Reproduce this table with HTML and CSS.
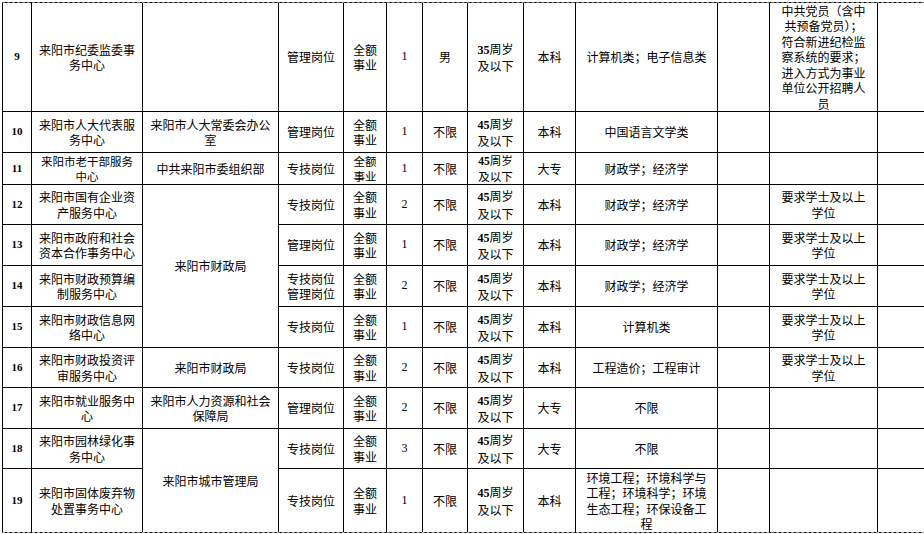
FILE: index.html
```html
<!DOCTYPE html>
<html lang="zh-CN">
<head>
<meta charset="utf-8">
<title>岗位表</title>
<link rel="stylesheet" href="styles.css">
</head>
<body>
<div class="grid">
  <div class="cell num">9</div><div class="cell">来阳市纪委监委事<br>务中心</div><div class="cell"></div><div class="cell">管理岗位</div><div class="cell">全额<br>事业</div><div class="cell cnt">1</div><div class="cell">男</div><div class="cell"><span><span class="dg">35</span>周岁<br>及以下</span></div><div class="cell">本科</div><div class="cell">计算机类；电子信息类</div><div class="cell"></div><div class="cell">中共党员（含中<br>共预备党员）；<br>符合新进纪检监<br>察系统的要求；<br>进入方式为事业<br>单位公开招聘人<br>员</div><div class="cell"></div>

  <div class="cell num">10</div><div class="cell">来阳市人大代表服<br>务中心</div><div class="cell">来阳市人大常委会办公<br>室</div><div class="cell">管理岗位</div><div class="cell">全额<br>事业</div><div class="cell cnt">1</div><div class="cell">不限</div><div class="cell"><span><span class="dg">45</span>周岁<br>及以下</span></div><div class="cell">本科</div><div class="cell">中国语言文学类</div><div class="cell"></div><div class="cell"></div><div class="cell"></div>

  <div class="cell num">11</div><div class="cell tight">来阳市老干部服务<br>中心</div><div class="cell">中共来阳市委组织部</div><div class="cell">专技岗位</div><div class="cell tight">全额<br>事业</div><div class="cell cnt">1</div><div class="cell">不限</div><div class="cell tight"><span><span class="dg">45</span>周岁<br>及以下</span></div><div class="cell">大专</div><div class="cell">财政学；经济学</div><div class="cell"></div><div class="cell"></div><div class="cell"></div>

  <div class="cell num">12</div><div class="cell">来阳市国有企业资<br>产服务中心</div><div class="cell span4">来阳市财政局</div><div class="cell">专技岗位</div><div class="cell">全额<br>事业</div><div class="cell cnt">2</div><div class="cell">不限</div><div class="cell"><span><span class="dg">45</span>周岁<br>及以下</span></div><div class="cell">本科</div><div class="cell">财政学；经济学</div><div class="cell"></div><div class="cell">要求学士及以上<br>学位</div><div class="cell"></div>

  <div class="cell num">13</div><div class="cell">来阳市政府和社会<br>资本合作事务中心</div><div class="cell">管理岗位</div><div class="cell">全额<br>事业</div><div class="cell cnt">1</div><div class="cell">不限</div><div class="cell"><span><span class="dg">45</span>周岁<br>及以下</span></div><div class="cell">本科</div><div class="cell">财政学；经济学</div><div class="cell"></div><div class="cell">要求学士及以上<br>学位</div><div class="cell"></div>

  <div class="cell num">14</div><div class="cell">来阳市财政预算编<br>制服务中心</div><div class="cell">专技岗位<br>管理岗位</div><div class="cell">全额<br>事业</div><div class="cell cnt">2</div><div class="cell">不限</div><div class="cell"><span><span class="dg">45</span>周岁<br>及以下</span></div><div class="cell">本科</div><div class="cell">财政学；经济学</div><div class="cell"></div><div class="cell">要求学士及以上<br>学位</div><div class="cell"></div>

  <div class="cell num">15</div><div class="cell">来阳市财政信息网<br>络中心</div><div class="cell">专技岗位</div><div class="cell">全额<br>事业</div><div class="cell cnt">1</div><div class="cell">不限</div><div class="cell"><span><span class="dg">45</span>周岁<br>及以下</span></div><div class="cell">本科</div><div class="cell">计算机类</div><div class="cell"></div><div class="cell">要求学士及以上<br>学位</div><div class="cell"></div>

  <div class="cell num">16</div><div class="cell">来阳市财政投资评<br>审服务中心</div><div class="cell">来阳市财政局</div><div class="cell">专技岗位</div><div class="cell">全额<br>事业</div><div class="cell cnt">2</div><div class="cell">不限</div><div class="cell"><span><span class="dg">45</span>周岁<br>及以下</span></div><div class="cell">本科</div><div class="cell">工程造价；工程审计</div><div class="cell"></div><div class="cell">要求学士及以上<br>学位</div><div class="cell"></div>

  <div class="cell num">17</div><div class="cell">来阳市就业服务中<br>心</div><div class="cell">来阳市人力资源和社会<br>保障局</div><div class="cell">管理岗位</div><div class="cell">全额<br>事业</div><div class="cell cnt">2</div><div class="cell">不限</div><div class="cell"><span><span class="dg">45</span>周岁<br>及以下</span></div><div class="cell">大专</div><div class="cell">不限</div><div class="cell"></div><div class="cell"></div><div class="cell"></div>

  <div class="cell num">18</div><div class="cell">来阳市园林绿化事<br>务中心</div><div class="cell span2">来阳市城市管理局</div><div class="cell">专技岗位</div><div class="cell">全额<br>事业</div><div class="cell cnt">3</div><div class="cell">不限</div><div class="cell"><span><span class="dg">45</span>周岁<br>及以下</span></div><div class="cell">大专</div><div class="cell">不限</div><div class="cell"></div><div class="cell"></div><div class="cell"></div>

  <div class="cell num">19</div><div class="cell">来阳市固体废弃物<br>处置事务中心</div><div class="cell">专技岗位</div><div class="cell">全额<br>事业</div><div class="cell cnt">1</div><div class="cell">不限</div><div class="cell"><span><span class="dg">45</span>周岁<br>及以下</span></div><div class="cell">本科</div><div class="cell">环境工程；环境科学与<br>工程；环境科学；环境<br>生态工程；环保设备工<br>程</div><div class="cell"></div><div class="cell"></div><div class="cell"></div>
</div>
</body>
</html>
```

FILE: styles.css
```css
html, body {
  margin: 0;
  padding: 0;
  background: #fff;
  overflow: hidden;
}
body {
  padding: 2px 0 0 2px;
  font-family: "Noto Sans CJK SC", "Noto Sans", sans-serif;
  font-size: 12px;
  line-height: 15.5px;
  color: #000;
}
.grid {
  display: grid;
  grid-template-columns: 28px 110px 135px 64px 42px 35px 44px 55px 51px 141px 51px 107px 46px;
  grid-template-rows: 108px 40px 31px 39px 40px 40px 40px 39px 40px 39px 63px;
  gap: 1px;
  background: #000;
  border-left: 1px solid #000;
  border-top: 1px dashed #7a7a7a;
  border-bottom: 1px dashed #9a9a9a;
  width: 921px;
}
.cell {
  background: #fff;
  display: flex;
  align-items: center;
  justify-content: center;
  text-align: center;
  white-space: nowrap;
  overflow: hidden;
}
.tight {
  font-size: 11.5px;
  line-height: 15px;
}
.tight .dg { font-size: 11.5px; }
.span4 { grid-row: span 4; }
.span2 { grid-row: span 2; }
.num {
  font-family: "Liberation Serif", serif;
  font-weight: bold;
  font-size: 11px;
}
.cnt {
  font-family: "Liberation Serif", serif;
  font-size: 12px;
}
.dg {
  font-family: "Liberation Serif", serif;
  font-weight: bold;
  font-size: 12px;
}
```
